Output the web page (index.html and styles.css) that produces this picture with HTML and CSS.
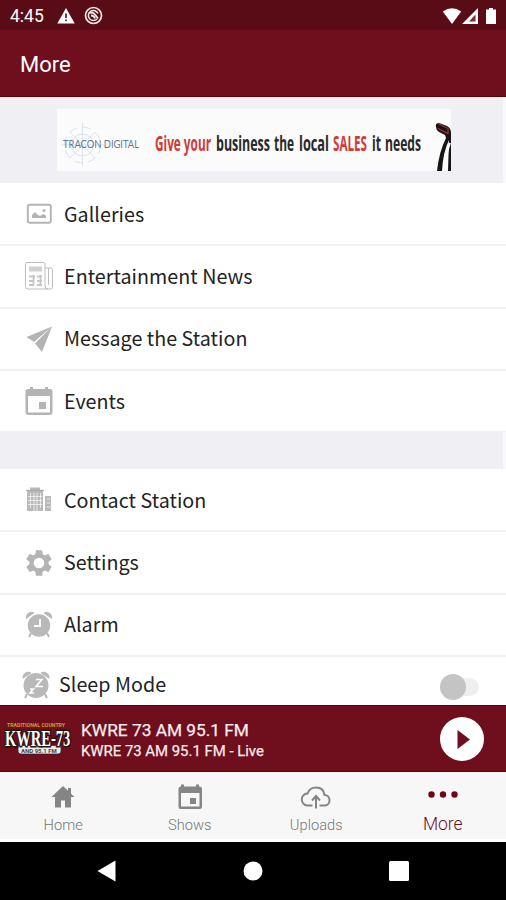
FILE: index.html
```html
<!DOCTYPE html>
<html lang="en">
<head>
    <meta charset="UTF-8">
    <title>More</title>
    <meta name="viewport" content="width=device-width, initial-scale=1">
    <link rel="stylesheet" href="styles.css">
</head>
<body>
    <div class="status-bar">
        <span class="clock">4:45</span>
        <svg class="warn" width="18" height="16" viewBox="0 0 18 16"><path d="M9 0 17.700 15.500H.3z" fill="#fff"/><path d="M9 5.500v4.500M9 11.500v1.800" stroke="#590c15" stroke-width="1.600"/></svg>
        <svg class="sync" width="19" height="19" viewBox="0 0 19 19" fill="none" stroke="#f6e9ea"><circle cx="9.500" cy="9.500" r="8" stroke-width="1.700"/><path d="M14 7.500A5 5 0 1 0 13 13" stroke-width="1.500"/><path d="M5 7c4-1.500 6 1 9 5.500M7 9.500q3 0 4 3" stroke-width="1.800"/></svg>
        <svg class="signals" width="58" height="18" viewBox="0 0 58 18" fill="#fff"><path d="M.8 4.500Q10-2 19.200 4.500L10 17z"/><path d="M36 1v16H20z"/><path d="M33.500 7.500v7h-6.500z" fill="#590c15" opacity=".85"/><path d="M47 1h4v1.500h3V17H44V2.500h3z"/></svg>
    </div>
    <header class="header">More</header>

    <main class="content">
        <div class="ad">
            <svg width="394" height="62" viewBox="0 0 394 62">
                <rect width="394" height="62" fill="#fbfbfb"/>
                <g fill="none" stroke="#d5dce2" stroke-width=".8">
                    <circle cx="25.500" cy="36" r="18" stroke-dasharray="9 5"/>
                    <circle cx="25.500" cy="36" r="11"/>
                    <path d="M25.500 14v43M4 36h43M13 23l25 26M38 23 13 49"/>
                </g>
                <text class="ad-brand" x="6" y="39" textLength="76" lengthAdjust="spacingAndGlyphs">TRACON DIGITAL</text>
                <g class="ad-text" transform="translate(0 42) scale(1 1.750)">
                    <text class="red" x="98" y="0" textLength="56" lengthAdjust="spacingAndGlyphs">Give your</text>
                    <text x="159" y="0" textLength="54" lengthAdjust="spacingAndGlyphs">business</text>
                    <text x="217" y="0" textLength="20" lengthAdjust="spacingAndGlyphs">the</text>
                    <text x="242" y="0" textLength="30" lengthAdjust="spacingAndGlyphs">local</text>
                    <text class="red" x="276" y="0" textLength="34" lengthAdjust="spacingAndGlyphs">SALES</text>
                    <text x="315" y="0" textLength="9" lengthAdjust="spacingAndGlyphs">it</text>
                    <text x="328" y="0" textLength="36" lengthAdjust="spacingAndGlyphs">needs</text>
                </g>
                <path d="M379 18q-1-4 3-4l8 3q4 2 4 7v38h-3l1-31q-6 12-7 31h-5q2-19 9-33l-1-3-6-3q-3-2-3-5z" fill="#151515"/>
                <path d="M381 14.500l10 5v5l-10-5" fill="none" stroke="#a82f32" stroke-width="1.200"/>
                <path d="M393 34q-4 10-5 28" fill="none" stroke="#fbfbfb" stroke-width="2"/>
            </svg>
        </div>

        <ul class="menu">
            <li class="row">
                <svg class="icon" viewBox="0 0 28 28"><rect x="2.800" y="4.800" width="23" height="18" rx="2" fill="none" stroke="#b4b4b4" stroke-width="1.900"/><path d="M7 18v-3l3-3 3 3 2 1 3-2 3 1.500V18z" fill="#b4b4b4"/><circle cx="19" cy="10.500" r="1.500" fill="#b4b4b4"/></svg>
                <span class="label">Galleries</span>
            </li>
            <li class="row">
                <svg class="icon" viewBox="0 0 28 28" fill="none" stroke="#bdbdbd"><path d="M20 6h6q1.500 0 1.500 1.500V25q0 2-2 2H3Q.5 27 .5 24.500V1.500Q.5.500 2 .5h16.500Q20 .5 20 2v22q0 3 3 3M23.500 6v17"/><path d="M4 7h13" stroke-width="5" stroke="#d0d0d0"/><path d="M4 14.500h6M12 14.500h5M4 19h5M12 19h5M4 23h5M12 23h5M8.500 13v11M15.500 13v11" stroke="#c6c6c6" stroke-width="1.800"/></svg>
                <span class="label">Entertainment News</span>
            </li>
            <li class="row">
                <svg class="icon" viewBox="0 0 28 28" fill="#b4b4b4"><path d="M27 1.500 1.500 12l7.500 5zM27 1.500 10 18.500l7 8.500z"/></svg>
                <span class="label">Message the Station</span>
            </li>
            <li class="row">
                <svg class="icon" viewBox="0 0 28 28"><path d="M5 0h3v2h12V0h3v2h2q2.500 0 2.500 2.500V25q0 3-3 3h-21q-3 0-3-3V4.500Q.5 2 3 2h2zM3 9v16.500h22V9z" fill="#b4b4b4" fill-rule="evenodd"/><path d="M14 15h7v7h-7z" fill="#b4b4b4"/></svg>
                <span class="label">Events</span>
            </li>
        </ul>
        <div class="divider"></div>
        <ul class="menu">
            <li class="row">
                <svg class="icon" viewBox="0 0 28 28"><path d="M5 1.500h10v3h3V25H2V4.500h3zM20 10h6v15h-6z" fill="#b9b9b9"/><path d="M1 4.500h18" stroke="#a8a8a8" stroke-width="1.300"/><path d="M5.500 7v15M9 7v18M12 7v18M15.500 7v15M3 10.500h14M3 14.500h14M3 18.500h14M21.500 13h4M21.500 17h4M21.500 21h4" stroke="#f4f4f4" stroke-width=".8"/></svg>
                <span class="label">Contact Station</span>
            </li>
            <li class="row">
                <svg class="icon" viewBox="1.500 1.500 21 21"><path fill="#b4b4b4" d="M19.140 12.940c.04-.3.060-.61.060-.94s-.02-.64-.07-.94l2.030-1.580a.49.490 0 0 0 .12-.61l-1.920-3.320a.49.490 0 0 0-.59-.22l-2.390.96a7 7 0 0 0-1.620-.94l-.36-2.540a.48.480 0 0 0-.48-.41h-3.840a.48.480 0 0 0-.47.410l-.36 2.540a7 7 0 0 0-1.620.94l-2.390-.96a.49.490 0 0 0-.59.220L2.740 8.870a.48.480 0 0 0 .12.610l2.030 1.580a6 6 0 0 0 0 1.880l-2.030 1.580a.49.490 0 0 0-.12.610l1.920 3.320c.12.220.370.290.59.220l2.390-.96c.5.380 1.030.7 1.620.94l.36 2.540c.05.240.240.410.48.410h3.840c.24 0 .44-.17.470-.41l.36-2.540a7 7 0 0 0 1.620-.94l2.390.96c.22.080.470 0 .59-.22l1.920-3.320a.48.480 0 0 0-.12-.61zM12 16a4 4 0 1 1 0-8 4 4 0 0 1 0 8"/></svg>
                <span class="label">Settings</span>
            </li>
            <li class="row">
                <svg class="icon" viewBox="0 0 28 28"><path d="M1 8Q0 3 5 1q3-1 4.500 1zM27 8q1-5-4-7-3-1-4.500 1z" fill="#b9b9b9"/><circle cx="14" cy="14.500" r="11.200" fill="#b9b9b9"/><path d="m6 22-2 4m18-4 2 4" stroke="#b9b9b9" stroke-width="2"/><path d="M15 8v7H9" fill="none" stroke="#fff" stroke-width="1.800"/></svg>
                <span class="label">Alarm</span>
            </li>
            <li class="row sleep">
                <svg class="icon" viewBox="0 0 28 28"><path d="M.5 8Q0 3 4.500 1 8 0 9.500 2zM27.500 8q.5-5-4-7-3.500-1-5 1z" fill="#b9b9b9"/><circle cx="14" cy="14.500" r="12.500" fill="#b9b9b9"/><path d="m5 23-2 4m20-4 2 4" stroke="#b9b9b9" stroke-width="2"/><path d="M14 8.500h6l-6 7h7M8 18h3.500L8 22h4" fill="none" stroke="#fff" stroke-width="1.600"/></svg>
                <span class="label">Sleep Mode</span>
                <span class="toggle"></span>
            </li>
        </ul>
    </main>

    <div class="player">
        <svg class="logo" width="72" height="40" viewBox="0 0 72 40">
            <text class="logo-top" x="5" y="8">TRADITIONAL COUNTRY</text>
            <rect x="16" y="26.500" width="43" height="8.500" rx="3" fill="#ececec" stroke="#222" stroke-width=".7"/>
            <text class="logo-name" transform="translate(3 26.500) scale(1 1.600)">KWRE-73</text>
            <text class="logo-sub" x="19" y="33.500">AND 95.1 FM</text>
        </svg>
        <div class="track">
            <div class="title">KWRE 73 AM 95.1 FM</div>
            <div class="subtitle">KWRE 73 AM 95.1 FM - Live</div>
        </div>
        <svg class="play" width="44" height="44" viewBox="0 0 44 44"><circle cx="22" cy="22" r="22" fill="#fff"/><path d="M17.500 13 30 22.500 17.500 32z" fill="#6f0e1c"/></svg>
    </div>

    <nav class="tabs">
        <div class="tab">
            <svg width="28" height="28" viewBox="0 0 28 28"><path d="M14 3 2.500 14H6v10.500h6v-7h4v7h6V14h3.500L22 10.700V5h-3v2.800z" fill="#858585"/></svg>
            <span>Home</span>
        </div>
        <div class="tab">
            <svg width="28" height="28" viewBox="0 0 28 28"><path d="M5 1.500h3v2h12v-2h3v2h.5Q26 3.500 26 6v17.500q0 2.500-2.500 2.500h-19Q2.500 26 2.500 23.500V6q0-2.500 2.500-2.500zM5 10v13.500h18.500V10z" fill="#858585" fill-rule="evenodd"/><path d="M14 15h6v6h-6z" fill="#858585"/></svg>
            <span>Shows</span>
        </div>
        <div class="tab">
            <svg width="32" height="28" viewBox="0 0 32 28" fill="none" stroke="#858585" stroke-width="2"><path d="M12.500 22.500H8a6 6 0 0 1-.5-12C9 6.500 12 4.500 16 4.500c5 0 8 3 8.500 7.500 3 0 5 2.200 5 5.200s-2.200 5.300-5 5.300h-5"/><path d="M16 25.500V14M12 17.500l4-4.500 4 4.500"/></svg>
            <span>Uploads</span>
        </div>
        <div class="tab active">
            <svg width="32" height="28" viewBox="0 0 32 28" fill="#710414"><circle cx="4.500" cy="11.500" r="3.200"/><circle cx="16" cy="11.500" r="3.200"/><circle cx="27.500" cy="11.500" r="3.200"/></svg>
            <span>More</span>
        </div>
    </nav>

    <div class="nav-bar">
        <svg width="20" height="22" viewBox="0 0 20 22"><path d="M.5 11 18.500.500v21z" fill="#fff"/></svg>
        <svg width="20" height="20" viewBox="0 0 20 20"><circle cx="10" cy="10" r="9.500" fill="#fff"/></svg>
        <svg width="20" height="20" viewBox="0 0 20 20"><rect width="20" height="20" rx="1.500" fill="#fff"/></svg>
    </div>
</body>
</html>
```

FILE: styles.css
```css
:root {
    --primary: #6f0e1c;
    --primary-dark: #590c15;
    --gray-bg: #efeff4;
}
* {
    box-sizing: border-box;
}
body {
    margin: 0;
    width: 506px;
    height: 900px;
    overflow: hidden;
    display: flex;
    flex-direction: column;
    background: #fff;
    font-family: Roboto, "Liberation Sans", sans-serif;
}

/* top */
.status-bar {
    flex: none;
    height: 30px;
    display: flex;
    align-items: center;
    padding: 1px 6px 0 10px;
    background: var(--primary-dark);
    color: #fff;
}
.clock {
    width: 47px;
    font-size: 17.5px;
    line-height: 20px;
}
.sync {
    margin-left: 9px;
}
.signals {
    margin-left: auto;
}
.header {
    flex: none;
    height: 67px;
    padding: 2px 0 0 20px;
    line-height: 66px;
    font-size: 22px;
    color: #fff;
    background: var(--primary);
    border-bottom: 1px solid #5b0207;
}

/* list */
.content {
    flex: 1;
    min-height: 0;
    overflow: hidden;
}
.ad,
.divider {
    background: var(--gray-bg);
    border-right: 3px solid #f9f9fb;
}
.ad {
    height: 86px;
    padding: 12px 0 0 57px;
}
.ad svg {
    display: block;
}
.ad-brand {
    font: 10.5px Lato, sans-serif;
    fill: #637b99;
}
.ad-text {
    font: bold 12px "Open Sans", sans-serif;
    fill: #292929;
}
.ad-text .red {
    fill: #d13a36;
}
.divider {
    height: 37px;
}
.menu {
    list-style: none;
    margin: 0;
    padding: 0;
}
.row {
    height: 62.300px;
    display: flex;
    align-items: center;
    padding: 1px 27px 0 25px;
    border-bottom: 1px solid #f1f1f1;
    box-shadow: 0 1px 0 #f1f1f1;
}
.icon {
    flex: none;
    width: 28px;
    height: 28px;
}
.label {
    margin: -1px 0 0 11px;
    font-family: "Noto Sans CJK SC", "Noto Sans", sans-serif;
    font-size: 19.700px;
    line-height: 30px;
    letter-spacing: .03px;
    color: #222;
}
.sleep {
    padding: 0 27px 4px 22px;
}
.sleep .label {
    margin-left: 9px;
}
.toggle {
    position: relative;
    width: 39px;
    height: 26px;
    margin: 5px 0 0 auto;
}
.toggle::before,
.toggle::after {
    content: "";
    position: absolute;
}
.toggle::before {
    top: 4px;
    right: 0;
    width: 34px;
    height: 18px;
    border-radius: 9px;
    background: #efefef;
}
.toggle::after {
    top: 0;
    left: 0;
    width: 26px;
    height: 26px;
    border-radius: 50%;
    background: #c4c4c4;
}

/* player */
.player {
    flex: none;
    height: 67px;
    display: flex;
    align-items: center;
    padding: 0 22px 0 2px;
    background: var(--primary);
    border-top: 1px solid #5b0207;
    border-bottom: 1px solid #5b0207;
    color: #f8eced;
}
.logo {
    flex: none;
}
.logo-top {
    font: bold 5.200px Roboto, sans-serif;
    fill: #d99a22;
}
.logo-name {
    font: bold 14.500px "Liberation Serif", serif;
    fill: #fff;
    stroke: #241517;
    stroke-width: 2px;
    paint-order: stroke;
}
.logo-sub {
    font: bold 6px Roboto, sans-serif;
    fill: #444;
}
.track {
    margin: 3px 0 0 7px;
    white-space: nowrap;
}
.title {
    font-size: 17.300px;
    line-height: 22px;
}
.subtitle {
    font-size: 14.900px;
    line-height: 21px;
}
.title,
.subtitle {
    -webkit-text-stroke: .25px;
}
.play {
    margin-left: auto;
}

/* bottom */
.tabs {
    flex: none;
    height: 70px;
    display: flex;
    background: #f7f7f7;
    border-bottom: 3px solid #fff;
}
.tab {
    flex: 1;
    display: flex;
    flex-direction: column;
    align-items: center;
    padding-top: 11px;
    font-size: 14.700px;
    font-weight: 300;
    line-height: 28px;
    color: #777;
}
.tab svg {
    flex: none;
}
.active {
    font-size: 17.500px;
    line-height: 26px;
    color: var(--primary);
}
.nav-bar {
    flex: none;
    height: 58px;
    display: flex;
    align-items: center;
    justify-content: center;
    gap: 126px;
    background: #000;
}
```
